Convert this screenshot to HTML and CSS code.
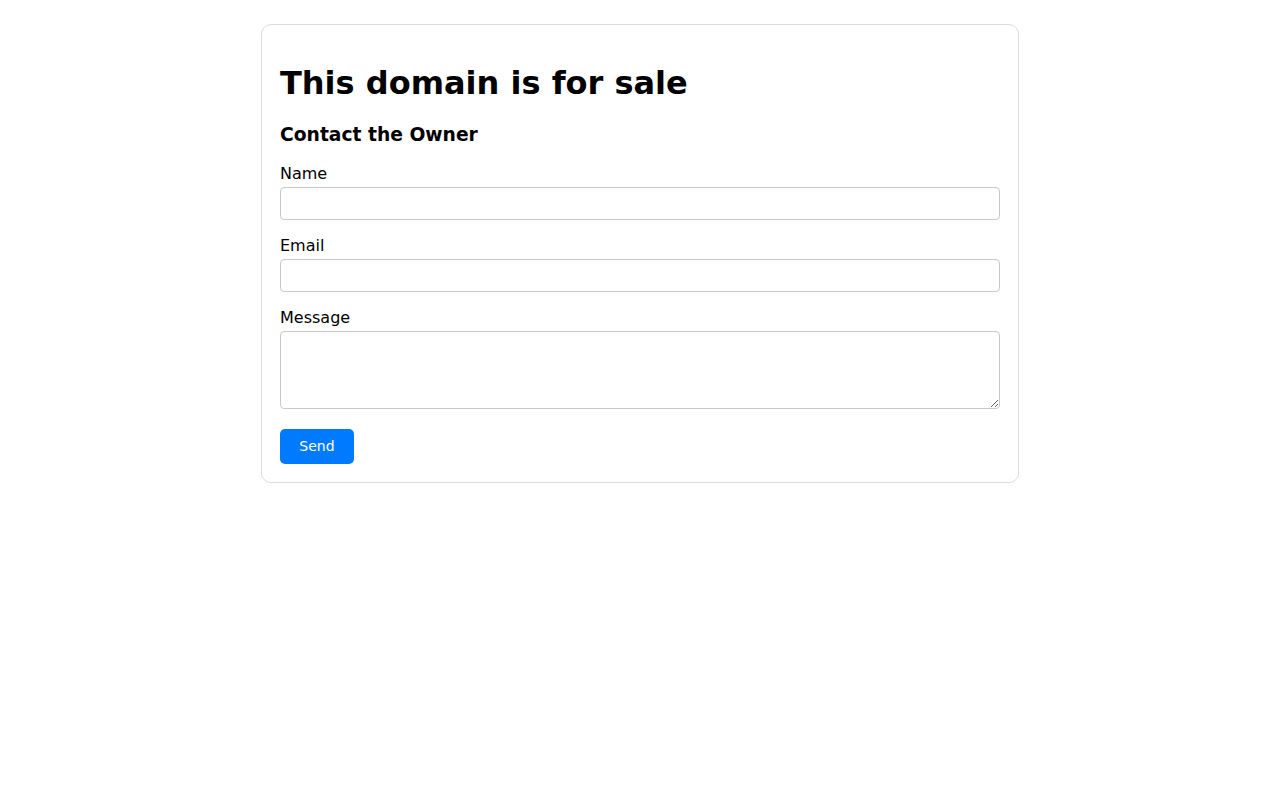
FILE: index.html
```html
<!DOCTYPE html>
<html lang="en">
<head>
<meta charset="utf-8">
<title>This domain is for sale</title>
<link rel="stylesheet" href="styles.css">
</head>
<body>
<main class="card">
  <h1 class="title">This domain is for sale</h1>
  <h2 class="subtitle">Contact the Owner</h2>
  <form class="form">
    <div class="field">
      <label class="label" for="name">Name</label>
      <input class="input" id="name" type="text">
    </div>
    <div class="field">
      <label class="label" for="email">Email</label>
      <input class="input" id="email" type="email">
    </div>
    <div class="field">
      <label class="label" for="message">Message</label>
      <textarea class="input textarea" id="message"></textarea>
    </div>
    <button class="button" type="button">Send</button>
  </form>
</main>
</body>
</html>
```

FILE: styles.css
```css
html, body {
  margin: 0;
  padding: 0;
  background: #fff;
}
body {
  font-family: "DejaVu Sans", sans-serif;
  color: #000;
  padding-top: 24px;
}
.card {
  box-sizing: border-box;
  width: 758px;
  margin: 0 auto;
  padding: 18px;
  border: 1px solid #dcdcdc;
  border-radius: 10px;
}
.title {
  font-size: 32px;
  font-weight: bold;
  margin: 21px 0 22px;
}
.subtitle {
  font-size: 18.72px;
  font-weight: bold;
  margin: 0 0 18.5px;
}
.form {
  display: flex;
  flex-direction: column;
  gap: 16px;
}
.field {
  display: flex;
  flex-direction: column;
  gap: 4px;
}
.label {
  font-size: 16px;
  line-height: 19px;
}
.input {
  box-sizing: border-box;
  width: 100%;
  height: 33px;
  margin: 0;
  border: 1px solid #c8c8c8;
  border-radius: 4px;
  padding: 6px 8px;
  font-family: "DejaVu Sans", sans-serif;
  font-size: 16px;
  background: #fff;
}
.textarea {
  height: 78px;
  resize: vertical;
  display: block;
}
.button {
  align-self: flex-start;
  margin-top: 4px;
  width: 74px;
  height: 35px;
  border: none;
  border-radius: 5px;
  background: #007bff;
  color: #fff;
  font-family: "DejaVu Sans", sans-serif;
  font-size: 14px;
  padding: 0;
  cursor: pointer;
}
```
